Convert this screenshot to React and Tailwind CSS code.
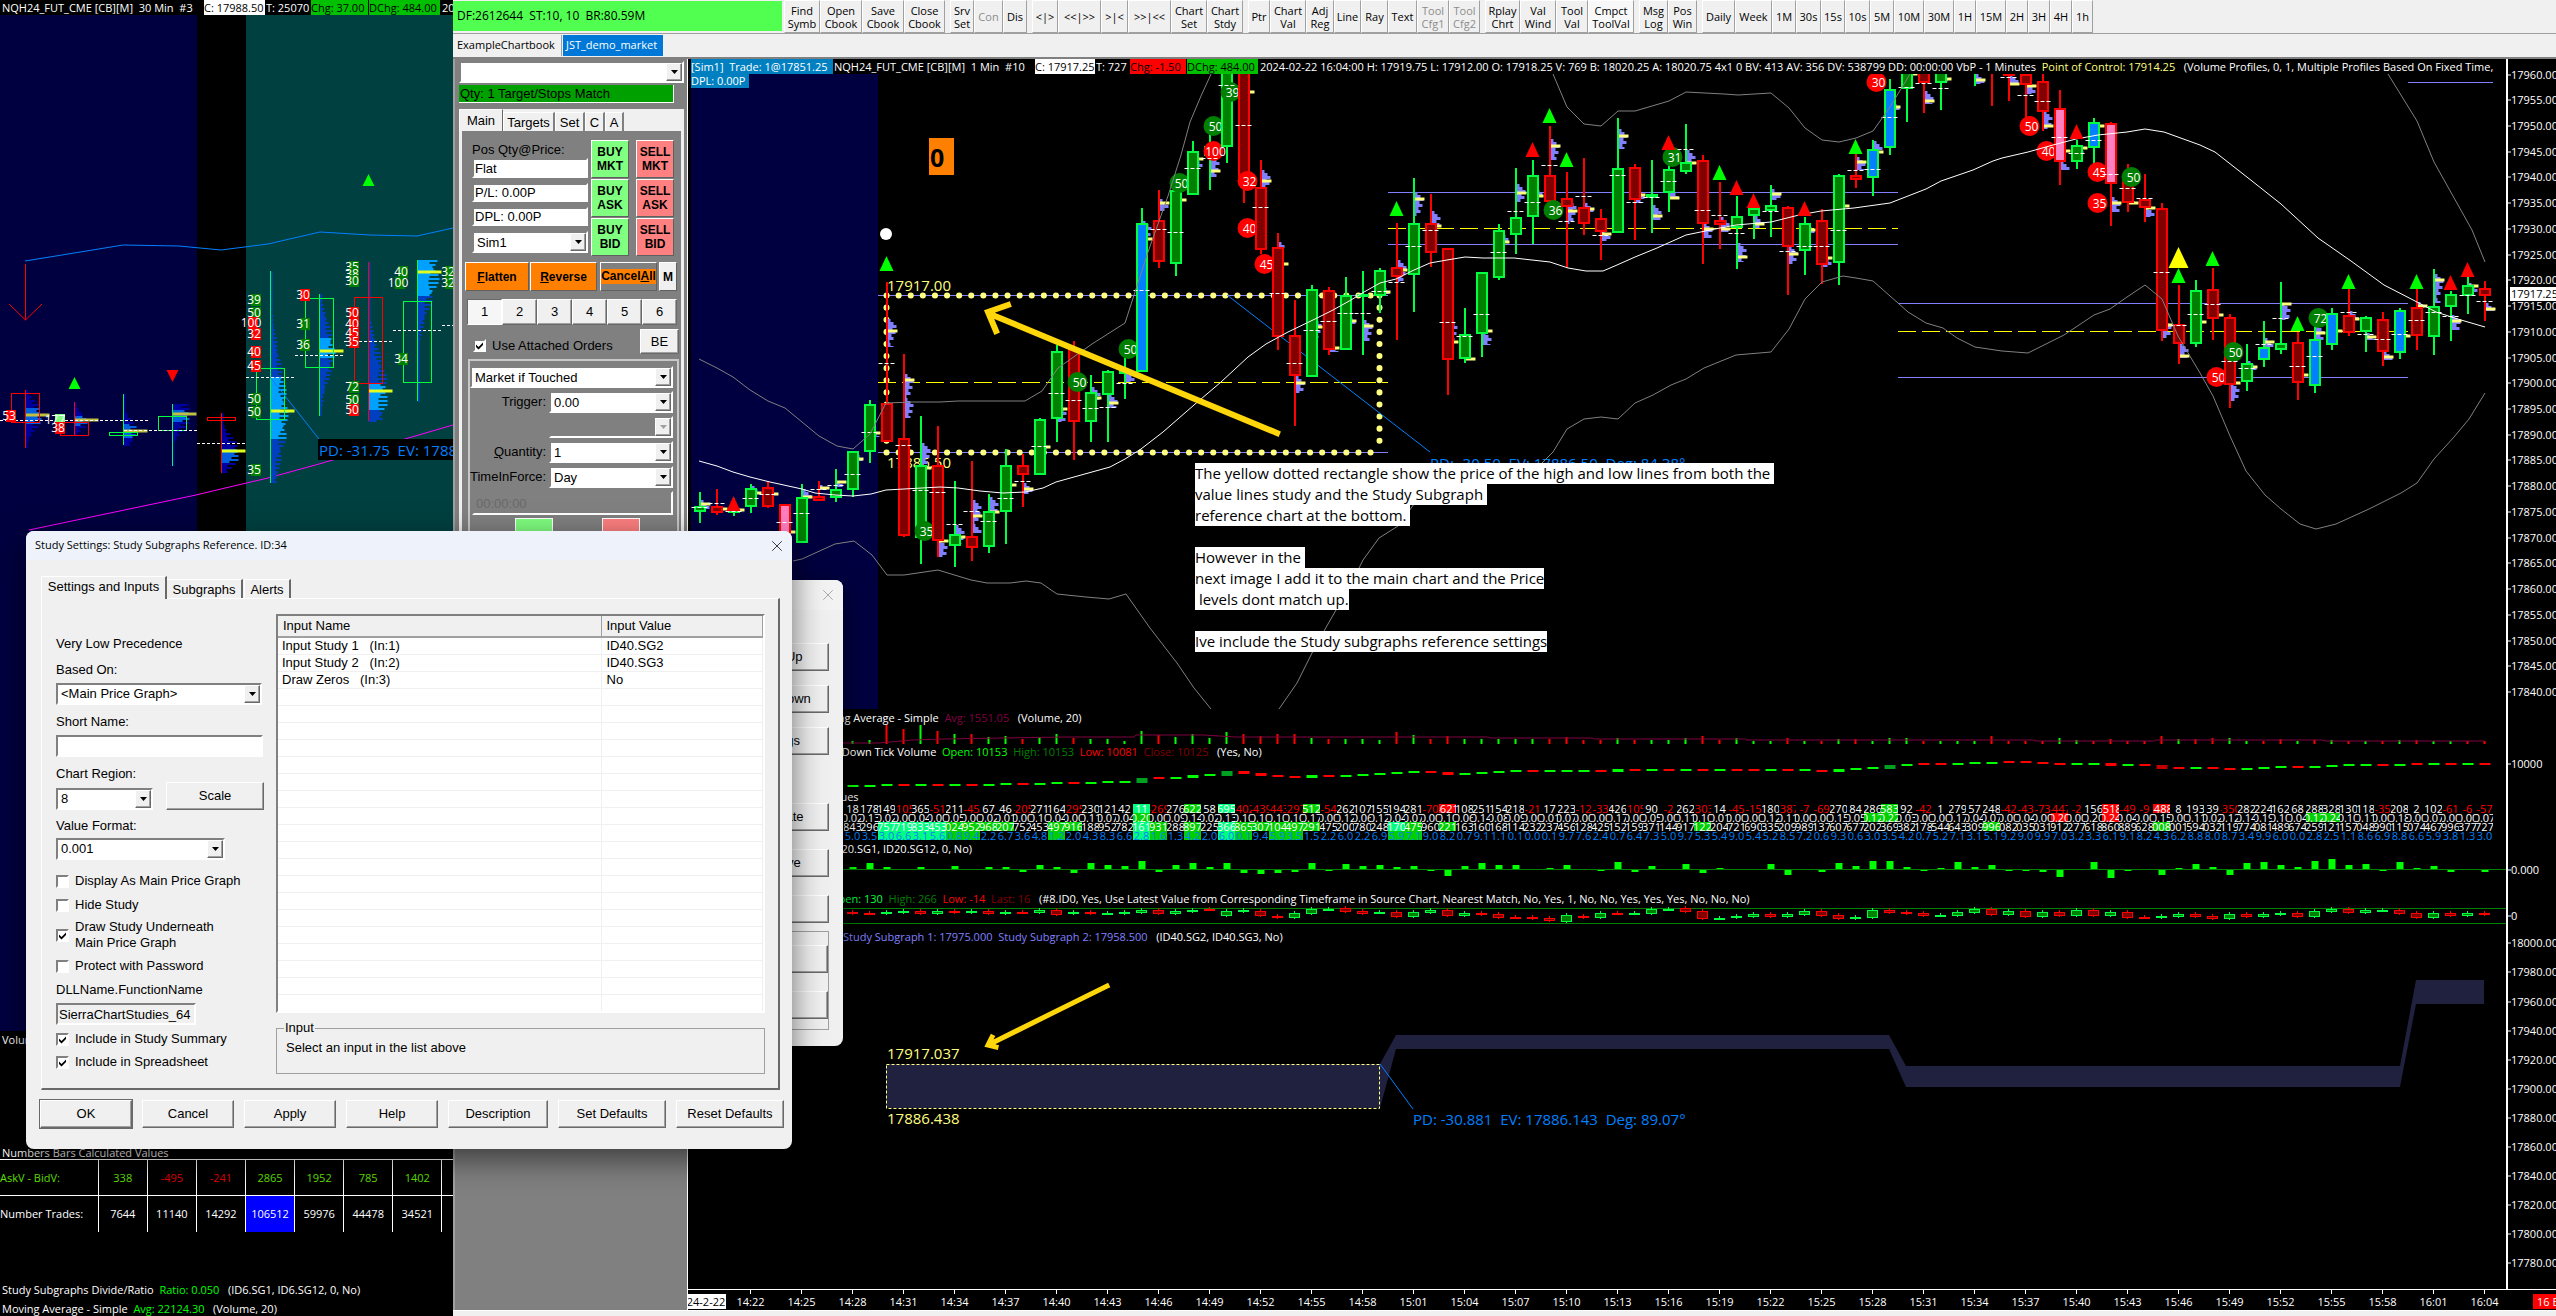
import { X } from 'lucide-react'

const SLOT = 17
const X0 = 699.5
const AXIS_X = 2507
const barX = (i) => X0 + SLOT * i

const PALETTE = {
    G: { fill: '#008000', stroke: '#00ff40' },
    R: { fill: '#800000', stroke: '#ff0000' },
    B: { fill: '#0080ff', stroke: '#00ff40' },
    P: { fill: '#ff80c0', stroke: '#ff0000' },
}

// type, high, top, bottom, low, open-close dash, profile top, profile bottom, poc
const CANDLES = [
    ['G', 492, 507, 511, 523, 507, 500, 510, 504],
    ['R', 489, 507, 512, 515, 503, 0, 0, 509],
    ['G', 498, 510, 512, 516, 511, 0, 0, 510],
    ['G', 484, 489, 506, 513, 498, 486, 493, 493],
    ['R', 481, 488, 506, 508, 494, 0, 0, 494],
    ['P', 504, 505, 545, 548, 522, 0, 0, 532],
    ['G', 484, 498, 542, 543, 513, 489, 499, 497],
    ['R', 481, 497, 500, 501, 489, 485, 490, 488],
    ['G', 469, 490, 497, 502, 485, 481, 487, 482],
    ['G', 451, 452, 489, 497, 474, 452, 462, 459],
    ['G', 400, 405, 451, 463, 432, 430, 437, 433],
    ['R', 282, 404, 441, 441, 363, 319, 347, 331],
    ['R', 354, 439, 535, 537, 445, 374, 418, 380],
    ['G', 416, 466, 537, 564, 490, 443, 469, 468],
    ['R', 426, 466, 540, 557, 492, 540, 557, 541],
    ['G', 481, 535, 545, 567, 524, 525, 544, 537],
    ['R', 461, 537, 547, 561, 511, 500, 533, 516],
    ['G', 494, 512, 546, 553, 521, 497, 511, 512],
    ['G', 449, 466, 511, 544, 498, 0, 0, 485],
    ['R', 454, 466, 474, 507, 481, 483, 494, 489],
    ['G', 418, 420, 474, 475, 446, 445, 450, 447],
    ['G', 345, 352, 418, 442, 393, 406, 422, 409],
    ['R', 341, 350, 421, 460, 400, 0, 0, 0],
    ['G', 375, 393, 421, 442, 408, 387, 400, 398],
    ['G', 370, 372, 394, 442, 407, 394, 408, 403],
    ['G', 357, 371, 373, 399, 383, 372, 382, 0],
    ['B', 208, 224, 371, 372, 290, 221, 240, 239],
    ['R', 190, 221, 261, 268, 229, 199, 211, 203],
    ['G', 181, 191, 263, 276, 232, 0, 0, 200],
    ['G', 141, 152, 194, 194, 168, 158, 167, 159],
    ['G', 133, 147, 155, 190, 158, 156, 177, 171],
    ['G', 74, 70, 146, 163, 85, 0, 0, 0],
    ['R', 74, 70, 180, 203, 125, 0, 0, 92],
    ['R', 160, 188, 249, 254, 207, 170, 187, 181],
    ['R', 233, 248, 336, 350, 293, 242, 248, 264],
    ['R', 300, 336, 375, 426, 363, 376, 393, 383],
    ['G', 285, 290, 376, 377, 330, 318, 338, 327],
    ['R', 287, 291, 349, 355, 321, 345, 352, 348],
    ['G', 277, 296, 349, 350, 313, 315, 325, 321],
    ['G', 271, 295, 296, 355, 313, 320, 341, 326],
    ['G', 268, 271, 295, 313, 291, 285, 295, 292],
    ['R', 223, 268, 276, 340, 282, 260, 282, 270],
    ['G', 178, 224, 274, 312, 246, 192, 216, 199],
    ['R', 194, 224, 252, 267, 230, 211, 228, 226],
    ['R', 249, 249, 359, 395, 322, 320, 340, 342],
    ['G', 308, 335, 358, 363, 336, 0, 0, 359],
    ['G', 272, 273, 333, 357, 314, 332, 345, 331],
    ['G', 224, 231, 277, 280, 252, 232, 243, 242],
    ['G', 168, 218, 234, 254, 211, 184, 202, 193],
    ['G', 160, 176, 216, 244, 202, 187, 197, 196],
    ['R', 126, 176, 201, 201, 165, 139, 160, 146],
    ['R', 172, 199, 206, 268, 221, 200, 224, 211],
    ['R', 158, 208, 223, 235, 196, 203, 214, 209],
    ['R', 209, 219, 231, 260, 235, 230, 241, 234],
    ['G', 118, 169, 232, 233, 175, 129, 149, 136],
    ['R', 164, 168, 199, 240, 202, 190, 203, 195],
    ['G', 160, 195, 197, 233, 197, 205, 220, 216],
    ['G', 161, 170, 192, 212, 181, 190, 198, 198],
    ['G', 124, 163, 171, 174, 149, 150, 164, 163],
    ['R', 155, 161, 223, 264, 210, 223, 238, 229],
    ['R', 182, 221, 224, 249, 215, 217, 232, 229],
    ['G', 196, 217, 227, 269, 233, 243, 262, 257],
    ['G', 207, 209, 215, 239, 0, 216, 228, 224],
    ['G', 185, 206, 210, 237, 211, 189, 200, 194],
    ['R', 206, 208, 246, 295, 251, 246, 264, 254],
    ['G', 217, 224, 250, 275, 246, 224, 236, 230],
    ['R', 209, 221, 264, 284, 246, 256, 267, 258],
    ['G', 174, 176, 262, 285, 230, 0, 0, 206],
    ['R', 154, 176, 179, 188, 170, 157, 170, 162],
    ['B', 140, 150, 177, 196, 169, 141, 151, 152],
    ['B', 79, 90, 147, 155, 117, 101, 110, 107],
    ['G', 74, 70, 88, 122, 87, 0, 0, 74],
    ['R', 74, 70, 82, 113, 83, 91, 104, 101],
    ['G', 74, 70, 82, 110, 88, 76, 82, 79],
    null,
    ['G', 74, 60, 62, 86, 0, 74, 84, 80],
    ['R', 74, 60, 62, 106, 0, 0, 0, 0],
    ['R', 74, 70, 75, 101, 77, 74, 84, 84],
    ['R', 74, 75, 84, 118, 95, 84, 94, 86],
    ['R', 74, 82, 111, 131, 101, 111, 129, 126],
    ['P', 90, 109, 161, 185, 137, 161, 170, 151],
    ['G', 140, 146, 161, 169, 153, 148, 154, 148],
    ['B', 118, 123, 147, 168, 140, 0, 0, 126],
    ['P', 122, 124, 183, 226, 174, 197, 212, 203],
    ['R', 164, 180, 202, 212, 188, 198, 204, 203],
    ['R', 174, 200, 207, 222, 198, 207, 217, 208],
    ['R', 203, 209, 330, 341, 272, 320, 338, 325],
    ['R', 285, 325, 343, 364, 325, 343, 358, 356],
    ['G', 280, 291, 343, 347, 314, 0, 0, 322],
    ['R', 268, 290, 318, 340, 304, 0, 0, 315],
    ['R', 314, 318, 384, 408, 361, 383, 401, 383],
    ['G', 344, 364, 381, 391, 368, 361, 370, 367],
    ['B', 321, 348, 359, 367, 344, 338, 347, 342],
    ['G', 282, 344, 349, 354, 318, 303, 320, 304],
    ['R', 332, 343, 382, 400, 366, 371, 376, 375],
    ['B', 325, 340, 385, 393, 356, 325, 340, 333],
    ['B', 308, 314, 344, 350, 0, 0, 0, 331],
    ['R', 289, 316, 332, 336, 312, 311, 322, 319],
    ['G', 316, 318, 331, 352, 334, 333, 340, 337],
    ['R', 312, 320, 351, 366, 339, 351, 360, 357],
    ['B', 308, 311, 352, 359, 334, 0, 0, 336],
    ['R', 289, 308, 335, 350, 320, 302, 308, 306],
    ['G', 269, 307, 336, 355, 312, 274, 303, 280],
    ['G', 291, 295, 306, 341, 316, 315, 330, 321],
    ['G', 277, 286, 295, 314, 295, 283, 292, 286],
    ['R', 281, 289, 295, 321, 301, 303, 311, 309],
]

// bar index, apex y, colour, optional half width
const MARKERS = [
    [2, 496, '#f00'], [11, 256, '#0f0'], [41, 201, '#0f0'], [49, 142, '#f00'],
    [50, 108, '#0f0'], [51, 152, '#0f0'], [57, 135, '#f00'], [60, 165, '#0f0'],
    [61, 180, '#f00'], [62, 193, '#f00'], [65, 201, '#f00'], [68, 139, '#0f0'],
    [81, 124, '#f00'], [87, 268, '#0f0'], [87, 247, '#ff0', 10], [89, 251, '#0f0'],
    [94, 316, '#0f0'], [97, 274, '#0f0'], [101, 274, '#0f0'], [103, 275, '#f00'],
    [104, 262, '#f00'],
]

// bar index, centre y, volume, side
const BUBBLES = [
    [31, 92, 39, 'G'], [30, 126, 50, 'G'], [30, 151, 100, 'R'], [28, 183, 50, 'G'],
    [32, 181, 32, 'R'], [32, 228, 40, 'R'], [33, 264, 45, 'R'], [25, 349, 50, 'G'],
    [22, 382, 50, 'G'], [13, 531, 35, 'G'], [50, 210, 36, 'G'], [57, 157, 31, 'G'],
    [69, 82, 30, 'R'], [78, 126, 50, 'R'], [79, 151, 40, 'R'], [82, 172, 45, 'R'],
    [82, 203, 35, 'R'], [84, 177, 50, 'G'], [90, 352, 50, 'G'], [89, 377, 50, 'R'],
    [95, 318, 72, 'G'],
]

const MOVING_AVERAGE =
    '699,461 717,466 733,472 750,477 770,482 802,489 815,493 835,495 853,496 871,494 886,490 904,489 940,487 958,488 980,491 1003,493 1025,492 1043,488 1056,482 1074,477 1092,472 1110,467 1125,459 1141,449 1163,432 1194,405 1221,382 1248,357 1266,344 1288,332 1315,319 1333,310 1351,300 1364,292 1380,283 1396,279 1414,270 1430,263 1447,260 1465,257 1483,258 1514,258 1550,262 1568,268 1586,271 1603,271 1617,265 1635,257 1657,248 1686,235 1720,228 1736,225 1771,222 1799,215 1821,211 1854,208 1890,203 1926,189 1941,181 1973,170 1993,161 2002,158 2028,152 2053,145 2076,139 2098,135 2127,132 2145,129 2164,132 2200,145 2215,152 2252,181 2281,204 2318,238 2351,261 2384,285 2417,302 2436,312 2461,320 2485,327'

const BANDS = [
    '699,359 717,368 733,377 750,390 768,401 785,408 802,422 819,436 837,446 853,449 870,434 886,403 913,402 940,402 958,401 1025,401 1042,391 1058,368 1075,356 1092,344 1125,323 1136,289 1148,252 1168,196 1181,155 1190,122 1201,96 1212,72',
    '1553,74 1567,107 1584,124 1601,126 1618,111 1635,111 1669,101 1686,92 1724,94 1738,95 1771,93 1789,108 1805,128 1822,140 1839,142 1856,138 1873,131 1890,107 1910,74',
    '2388,74 2417,121 2434,162 2472,230 2485,262',
    '793,561 802,559 835,544 854,541 872,555 887,575 904,575 938,570 971,580 987,583 1010,583 1026,581 1041,583 1057,594 1086,597 1109,599 1126,594 1150,628 1177,663 1194,688 1211,709',
    '1279,709 1297,683 1312,653 1324,631 1336,610 1359,568 1363,560 1379,538 1398,526 1417,500 1440,487 1500,474 1540,465 1553,452 1567,429 1584,419 1601,417 1618,419 1635,403 1653,395 1671,385 1686,379 1704,368 1736,355 1771,352 1789,329 1805,299 1822,282 1843,276 1856,278 1873,281 1898,303 1908,312 1926,323 1943,328 1957,338 1975,347 2002,351 2028,353 2064,335 2094,315 2110,309 2127,297 2145,285 2162,299 2178,336 2200,373 2213,396 2230,436 2246,471 2265,495 2281,509 2300,524 2316,529 2336,524 2369,509 2401,493 2417,483 2434,459 2454,437 2469,419 2485,393',
]

// x1, x2, high value, point of control, low value
const VALUE_AREAS = [
    [878, 1388, 295, 382, 452],
    [1388, 1898, 192, 228, 244],
    [1898, 2408, 303, 331, 377],
]

// The studies below the price start at bar 9
const FIRST = 9
const VOLUME_COLORS = 'GGRRGRGRGGRGGRGGGGRGGGGRRRRGRGGGRGRRGGGGGRRRRGRGGGRRGGGRGRGRGGGRGGGRRRRGGRRRRRGRRGGRRGRGRGRGRGGR'
const VOLUME = [
    3, 4, 19, 15, 19, 13, 10, 10, 7, 8, 5, 7, 10, 6, 5, 5, 3, 13, 9, 7, 10, 6, 12, 10, 8, 10, 10, 6, 5, 5, 5, 4, 12, 9, 5, 8, 5, 5, 5, 5, 5, 5, 7, 4, 4, 6, 4, 4, 4, 6,
    8, 4, 6, 3, 3, 6, 3, 3, 5, 5, 3, 6, 6, 3, 3, 3, 3, 8, 3, 3, 3, 6, 4, 3, 5, 3, 3, 8, 5, 5, 6, 6, 3, 3, 5, 3, 4, 4, 3, 3, 3, 4, 4, 3, 3, 3, 3,
]
const TICK_COLORS = 'GGGRGRGRGGRGGRGGGGRGGGGRRRRGRGGGGGRRGGGGRGGGRGRGRGRGRRGRGRGGGGGRRGGGRRRRGGRGRRRGRRGGGRGGGGRGRGRGR'
const TICK_Y = [
    289, 288, 284, 286, 286, 286, 286, 286, 284, 283, 283, 282, 278, 278, 278, 277, 277, 271, 265, 264, 259, 256, 250, 247, 253, 258, 260, 259, 258, 258, 254, 253, 250, 247, 247, 250, 252, 248, 247, 244, 243, 244, 242, 242, 242, 241, 240, 241, 240, 240,
    240, 240, 240, 240, 240, 240, 241, 243, 241, 237, 235, 231, 225, 223, 223, 221, 220, 218, 217, 217, 218, 221, 223, 221, 223, 226, 226, 231, 235, 233, 234, 237, 237, 234, 232, 232, 231, 228, 226, 226, 225, 225, 222, 222, 221, 221, 221,
]
const TICK_TALL = { 26: 5, 29: 3, 31: 5, 32: 3, 33: 3, 36: 3, 44: 3, 54: 3, 67: 3, 70: 4, 83: 3, 86: 4, 90: 2 }
const RATIO = [
    2, 6, 2, 0, 2, 0, 3, 0, 2, 2, -2, 4, 2, -3, 6, 4, 3, 8, -2, 4, 6, 2, 6, -3, -4, -3, -2, 6, -1, 5, 3, 4, 2, 3, -1, -6, 3, 6, 4, 4, 0, 1, 4, 0, -1, 7, -2, 3, 0, 5,
    -3, 1, 0, 0, 5, -5, 0, -2, 6, 3, 8, 8, 2, -1, 1, 7, 2, 4, -1, -1, -2, -7, 0, 7, -8, -1, 0, -5, 1, 5, 2, -5, 6, 7, 4, 2, 8, 10, 4, 5, -1, 7, 1, 3, -2, 0, -2,
]
// colour, top, bottom in thirds of a pixel from the region origin
const SOURCE =
    'R666,671 R668,671 G665,671 G663,670 R663,671 G662,671 R663,668 G663,668 R663,671 G666,672 R666,668 G659,668 R660,674 G666,672 R666,671 G669,671 G667,671 G660,668 R660,671 G663,671 G660,665 R657,660 G663,677 G660,665 R663,678 R678,683 G669,683 G657,671 G657,659 R655,665 R663,671 G666,670 R666,680 G666,680 G660,668 R660,677 G669,677 R670,674 R672,683 R681,684 R682,686 R684,694 G675,695 R678,683 G669,683 R669,671 G669,671 G657,671 G656,659 R655,665 R663,686 G684,686 G678,685 G672,681 R672,681 G672,681 G663,674 R663,677 R675,686 G681,686 G660,683 R660,668 R666,671 R669,677 G675,678 G666,677 G657,668 R657,674 G663,674 R663,680 G666,680 R666,677 G660,677 R660,677 G666,677 R666,683 R681,683 G678,683 G672,680 R672,681 R678,686 G672,686 R672,681 G672,680 G669,674 R669,680 G663,680 G657,665 R657,668 G660,669 G660,662 R660,671 R669,683 G669,683 R669,677 G669,677 R669,674'
        .split(' ')
        .map((s) => [s[0], ...s.slice(1).split(',').map(Number)])

const NUMBER_ROWS = [
    {
        color: 'text-white',
        values: '18 178 149 -105 365 -51 211 -45 67 46 -205 271 164 -295 230 121 42 11 -269 276 622 58 695 -402 -439 -443 -297 512 -54 262 107 155 194 281 -70 -621 108 251 154 218 -21 17 223 -12 -33 426 -105 90 -2 262 -303 14 -45 -15 180 -387 -7 -69 270 84 286 583 92 -42 1 279 57 248 -42 -43 -73 -447 -2 156 -518 -49 -9 -488 8 193 39 -350 282 224 162 68 288 328 130 118 -35 208 2 102 -61 -6 -57',
        cyan: [26, 31],
        green: [29, 36, 70],
        red: [44, 83, 86],
    },
    {
        color: 'text-white',
        values: '0.02 0.13 0.02 0.00 0.04 0.00 0.05 0.00 0.02 0.01 0.00 0.10 0.04 0.00 0.11 0.07 0.04 0.20 0.00 0.09 0.14 0.02 0.13 0.10 0.10 0.10 0.10 0.17 0.00 0.12 0.06 0.12 0.04 0.07 0.00 0.10 0.06 0.14 0.08 0.09 0.00 0.01 0.07 0.00 0.00 0.17 0.00 0.05 0.00 0.11 0.10 0.01 0.00 0.00 0.12 0.11 0.00 0.00 0.15 0.05 0.12 0.22 0.03 0.00 0.00 0.17 0.04 0.07 0.00 0.04 0.00 0.20 0.00 0.20 0.24 0.04 0.00 0.15 0.00 0.11 0.02 0.12 0.14 0.19 0.10 0.04 0.12 0.24 0.10 0.11 0.00 0.18 0.00 0.07 0.00 0.00 0.07',
        cyan: [],
        green: [26, 69, 70, 95, 96],
        red: [80, 83],
    },
    {
        color: 'text-white',
        values: '843 296 757 719 833 453 024 952 968 207 752 453 497 916 188 952 782 161 931 288 897 225 366 865 307 104 497 291 475 200 780 248 170 475 960 221 163 160 168 114 232 237 456 128 425 152 159 371 144 917 122 204 721 690 335 209 989 137 607 677 202 369 382 178 544 643 309 996 082 035 031 912 277 618 860 889 628 008 001 594 032 119 774 081 489 674 259 121 157 048 990 115 074 467 996 377 727',
        cyan: [11, 12, 13, 14, 26, 31, 41],
        green: [15, 16, 17, 18, 21, 22, 27, 29, 32, 33, 34, 35, 36, 42, 44, 59, 76, 86],
        red: [],
    },
    {
        color: 'text-[#0080ff]',
        values: '5.0 3.5 3.0 6.6 3.1 5.6 0.8 9.4 2.2 6.7 3.6 4.8 1.2 2.0 4.3 8.3 6.6 2.8 1.6 1.3 4.2 2.0 6.0 0.1 9.4 5.9 3.5 1.5 2.2 6.0 2.2 6.9 5.9 7.1 9.0 8.2 0.7 9.1 1.1 0.1 0.0 0.1 9.7 7.6 2.4 0.7 6.4 7.3 5.0 9.7 5.3 5.4 9.0 5.4 5.2 8.5 7.2 0.6 9.3 0.6 3.0 3.5 4.2 0.7 5.2 7.1 3.1 5.1 9.2 9.0 9.9 7.0 3.2 3.3 6.1 9.1 8.2 4.3 6.2 8.8 8.0 8.7 3.4 9.9 6.0 0.0 2.8 2.5 1.1 8.6 6.9 8.8 6.6 5.9 3.8 1.3 3.0',
        cyan: [11, 12, 13, 14, 26, 31],
        green: [15, 16, 21, 27, 29, 32, 34, 35, 41, 42],
        red: [],
    },
]

const RAISED = 'border border-t-white border-l-white border-r-[#696969] border-b-[#696969] bg-[#f0f0f0] shadow-[inset_-1px_-1px_0_#a0a0a0]'
const SUNKEN = 'border-2 border-t-[#808080] border-l-[#808080] border-r-white border-b-white'

const TOOLBAR = [
    [
        ['Find Symb', 'w-[36px]'], ['Open Cbook', 'w-[42px]'], ['Save Cbook', 'w-[42px]'], ['Close Cbook', 'w-[41px]'],
    ],
    [['Srv Set', 'w-[24px]'], ['Con', 'w-[29px]', 'off'], ['Dis', 'w-[24px]']],
    [
        ['<|>', 'w-[26px]'], ['<<|>>', 'w-[43px]'], ['>|<', 'w-[27px]'], ['>>|<<', 'w-[43px]'],
        ['Chart Set', 'w-[36px]'], ['Chart Stdy', 'w-[36px]'],
    ],
    [
        ['Ptr', 'w-[22px]'], ['Chart Val', 'w-[36px]'], ['Adj Reg', 'w-[28px]'], ['Line', 'w-[27px]'],
        ['Ray', 'w-[27px]'], ['Text', 'w-[29px]'], ['Tool Cfg1', 'w-[32px]', 'off'], ['Tool Cfg2', 'w-[31px]', 'off'],
    ],
    [
        ['Rplay Chrt', 'w-[35px]'], ['Val Wind', 'w-[36px]'], ['Tool Val', 'w-[32px]'], ['Cmpct ToolVal', 'w-[46px]', 'on'],
    ],
    [['Msg Log', 'w-[29px]'], ['Pos Win', 'w-[29px]']],
    [
        ['Daily', 'w-[33px]'], ['Week', 'w-[37px]'], ['1M', 'w-[24px]'], ['30s', 'w-[25px]'], ['15s', 'w-[24px]'],
        ['10s', 'w-[25px]'], ['5M', 'w-[24px]'], ['10M', 'w-[30px]'], ['30M', 'w-[30px]'], ['1H', 'w-[22px]'],
        ['15M', 'w-[30px]'], ['2H', 'w-[22px]'], ['3H', 'w-[22px]'], ['4H', 'w-[22px]'], ['1h', 'w-[21px]'],
    ],
]

function Toolbar() {
    return (
        <div className="flex h-[33px] shrink-0 gap-[5px] bg-[#f0f0f0]">
            <div className="mt-px mr-[-3px] flex h-[30px] w-[329px] shrink-0 items-center bg-[#50ff50] pl-1 text-[12px] whitespace-pre text-black">
                DF:2612644  ST:10, 10  BR:80.59M
            </div>
            {TOOLBAR.map((group, g) => (
                <div key={g} className="flex shrink-0">
                    {group.map(([label, width, state]) => (
                        <button
                            key={label}
                            type="button"
                            disabled={state === 'off'}
                            className={`${width} flex h-[33px] items-center justify-center border-t border-r border-b border-l border-t-white border-r-[#a0a0a0] border-b-[#a0a0a0] border-l-white text-center text-[11px] leading-[13px] disabled:text-[#8c8c8c] ${state === 'on' ? 'bg-[#f8f8f8]' : 'bg-[#f0f0f0]'}`}
                        >
                            {label}
                        </button>
                    ))}
                </div>
            ))}
        </div>
    )
}

function Tick() {
    return (
        <svg viewBox="0 0 9 9" className="pointer-events-none absolute top-[2px] left-[2px] hidden h-[9px] w-[9px] peer-checked:block">
            <path d="M1 3.5 L3.5 6 L8 1.5 V4 L3.5 8.5 L1 6Z" fill="#000" />
        </svg>
    )
}

function CheckBox({ label, checked, className = '' }) {
    return (
        <label className={`flex items-center gap-[6px] leading-[16px] ${className}`}>
            <span className="relative h-[13px] w-[13px] shrink-0">
                <input
                    type="checkbox"
                    defaultChecked={checked}
                    className={`peer block h-[13px] w-[13px] appearance-none bg-white ${SUNKEN}`}
                />
                <Tick />
            </span>
            {label}
        </label>
    )
}

function Combo({ id, name, value, className = '', disabled }) {
    return (
        <span className={`relative block h-[22px] ${SUNKEN} ${disabled ? 'bg-[#808080]' : 'bg-white'} ${className}`}>
            <select
                id={id}
                aria-label={name}
                disabled={disabled}
                className="h-full w-full appearance-none truncate bg-transparent pr-4 pl-[3px] text-[13px] leading-[16px] text-black outline-none"
            >
                <option>{value}</option>
            </select>
            <span className={`pointer-events-none absolute top-0 right-0 flex h-full w-4 items-center justify-center ${RAISED}`}>
                <svg viewBox="0 0 7 4" className="h-1 w-[7px]">
                    <path d="M0 0H7L3.5 4Z" fill={disabled ? '#a0a0a0' : '#000'} />
                </svg>
            </span>
        </span>
    )
}

const PAIRS = [['BUY', 'SELL', 'MKT'], ['BUY', 'SELL', 'ASK'], ['BUY', 'SELL', 'BID']]

function TradePanel() {
    const field = `block w-[116px] bg-white px-px text-[13px] ${SUNKEN}`
    const side = 'h-[38px] w-[38px] border border-t-white border-l-white border-r-[#606060] border-b-[#606060] text-[12px] leading-[14px] font-bold'
    const action = 'h-[29px] border border-t-white border-l-white border-r-[#606060] border-b-[#606060] text-[12px] font-bold'
    return (
        <aside className="w-[235px] shrink-0 overflow-hidden border-r border-l-2 border-r-white border-l-[#a0a0a0] bg-[#808080] pt-[2px] pr-[3px] pl-1 font-['Liberation_Sans',Arial,sans-serif] text-[13px] text-black">
            <Combo name="Trade configuration" value="" className="w-[225px]" />
            <div className="mt-[2px] h-[18px] w-[215px] border-r border-b border-white bg-[#00a000] px-px text-[13px] leading-[17px]">
                Qty: 1 Target/Stops Match
            </div>
            <div role="tablist" className="mt-[6px] flex h-[22px] w-[225px] items-end bg-[#f0f0f0]">
                <button role="tab" type="button" className="h-[22px] w-[44px] border-t border-r border-l border-t-white border-r-[#696969] border-l-white">Main</button>
                {[['Targets', 'w-[52px]'], ['Set', 'w-[30px]'], ['C', 'w-[20px]'], ['A', 'w-[19px]']].map(([t, w]) => (
                    <button key={t} role="tab" type="button" className={`${w} h-[19px] border-t border-r-2 border-l border-t-white border-r-[#808080] border-l-white`}>{t}</button>
                ))}
            </div>
            <div className="h-[900px] w-[225px] border-r-[3px] border-l-[3px] border-[#f0f0f0] pt-[9px]">
                <div className="flex">
                    <div className="ml-[10px] flex flex-col gap-[5px]">
                        <label className="block">
                            <span className="block h-[18px] leading-[20px]">Pos Qty@Price:</span>
                            <input readOnly value="Flat" className={`${field} h-[20px]`} />
                        </label>
                        <input readOnly aria-label="P/L" value="P/L: 0.00P" className={`${field} h-[19px]`} />
                        <input readOnly aria-label="DPL" value="DPL: 0.00P" className={`${field} h-[19px]`} />
                        <Combo name="Account" value="Sim1" className="w-[116px]" />
                    </div>
                    <div className="ml-[3px] flex flex-col gap-px">
                        {PAIRS.map(([buy, sell, kind]) => (
                            <div key={kind} className="flex gap-[7px]">
                                <button type="button" className={`${side} bg-[#80ff80]`}>{buy}<br />{kind}</button>
                                <button type="button" className={`${side} bg-[#ff8080]`}>{sell}<br />{kind}</button>
                            </div>
                        ))}
                    </div>
                </div>
                <div className="mt-[6px] ml-[3px] flex">
                    <button type="button" className={`${action} w-[64px] bg-[#ff8000]`}><u>F</u>latten</button>
                    <button type="button" className={`${action} ml-px w-[67px] bg-[#ff8000]`}><u>R</u>everse</button>
                    <button type="button" className={`${action} ml-[3px] flex w-[57px] items-center justify-center bg-[#808080]`}>
                        <span className="bg-[#ff8000] leading-[15px]">Cancel<u>A</u>ll</span>
                    </button>
                    <button type="button" className={`${action} ml-[2px] w-[18px] bg-[#f0f0f0]`}>M</button>
                </div>
                <div className="mt-2 ml-[5px] flex">
                    {[1, 2, 3, 4, 5, 6].map((n) => (
                        <button
                            key={n}
                            type="button"
                            className={`h-[26px] w-[35px] text-[13px] ${n === 1 ? 'border border-t-[#696969] border-l-[#696969] border-r-white border-b-white bg-[#f6f6f6]' : RAISED}`}
                        >
                            {n}
                        </button>
                    ))}
                </div>
                <div className="mt-1 mr-[2px] ml-[11px] flex items-center justify-between">
                    <CheckBox label="Use Attached Orders" checked className="pt-2" />
                    <button type="button" className={`h-[25px] w-[39px] ${RAISED}`}>BE</button>
                </div>
                <div className="mt-[5px] mr-[2px] ml-[6px] border-2 border-[#c8c8c8] pt-[5px]">
                    <Combo name="Order type" value="Market if Touched" className="w-[203px]" />
                    <div className="mt-[3px] grid grid-cols-[76px_124px] items-center gap-x-[3px] gap-y-[3px] text-right">
                        <label htmlFor="trigger">Trigger:</label>
                        <Combo id="trigger" value="0.00" />
                        <span />
                        <Combo name="Offset" value="" disabled />
                        <label htmlFor="quantity"><u>Q</u>uantity:</label>
                        <Combo id="quantity" value="1" />
                        <label htmlFor="tif">TimeInForce:</label>
                        <Combo id="tif" value="Day" />
                    </div>
                    <input readOnly disabled aria-label="Expiry" value="00:00:00" className={`mt-[3px] ml-[2px] block h-[24px] w-[201px] bg-[#808080] px-[2px] text-[#6a6a6a] ${SUNKEN}`} />
                    <div className="mt-[3px] ml-[45px] flex gap-[49px]">
                        <div className="h-[20px] w-[38px] border border-white bg-[#80ff80]" />
                        <div className="h-[20px] w-[38px] border border-white bg-[#ff8080]" />
                    </div>
                </div>
            </div>
        </aside>
    )
}

function Profile({ x, top, bottom }) {
    const widths = [3, 6, 9, 5, 8, 4, 6, 2]
    let d = `M${x} ${top}`
    for (let y = top, k = 0; y < bottom; y += 3, k++) {
        d += `H${x + widths[k % 8]}V${Math.min(y + 3, bottom)}`
    }
    return <path d={`${d}H${x}Z`} fill="#8080ff" />
}

function Candle({ x, data }) {
    const [type, high, top, bottom, low] = data
    const { fill, stroke } = PALETTE[type]
    return (
        <g stroke={stroke} strokeWidth="2" shapeRendering="crispEdges">
            <path d={`M${x} ${high}V${low}`} />
            <rect x={x - 5} y={top} width="10" height={Math.max(bottom - top, 1)} fill={fill} />
        </g>
    )
}

function AxisLabels({ items }) {
    return (
        <g className="text-[11px]" fill="#fff">
            {items.map(([y, text]) => (
                <g key={text}>
                    <path d={`M${AXIS_X} ${Math.round(y)}h4`} stroke="#fff" />
                    <text x="2511" y={y + 4}>{text}</text>
                </g>
            ))}
        </g>
    )
}

// One chart region; children are drawn in window coordinates
function Region({ top, height, heading, headingClass = '', className = '', children, after }) {
    return (
        <div className={`relative overflow-hidden ${className}`}>
            <svg className="absolute top-0 left-0" width="1868" height={height} viewBox={`688 ${top} 1868 ${height}`}>
                {children}
                <path d={`M${AXIS_X} ${top}v${height}`} stroke="#fff" strokeWidth="2" />
            </svg>
            <p className={`relative h-[15px] text-[11px] leading-[15px] whitespace-pre text-white ${headingClass}`}>{heading}</p>
            {after}
        </div>
    )
}

function PriceRegion() {
    const prices = Array.from({ length: 25 }, (_, k) => [74.5 + k * 25.73, `${17960 - k * 5}.00`])
    return (
        <Region
            top={59}
            height={651}
            className="h-[651px]"
            headingClass="pl-[3px]"
            heading={
                <span className="flex w-[1815px] overflow-hidden">
                    <span className="w-[142px] shrink-0 bg-[#0080c0]">[Sim1]  Trade: 1@17851.25</span>
                    <span className="w-[202px] shrink-0 pl-px">NQH24_FUT_CME [CB][M]  1 Min  #10</span>
                    <span className="w-[60px] shrink-0 bg-white text-black">C: 17917.25</span>
                    <span className="w-[35px] shrink-0 pl-px">T: 727</span>
                    <span className="w-[56px] shrink-0 bg-[#ff0000] text-black">Chg: -1.50</span>
                    <span className="ml-px w-[71px] shrink-0 bg-[#00c000] text-black">DChg: 484.00</span>
                    <span className="shrink-0 pl-[2px]">2024-02-22 16:04:00 H: 17919.75 L: 17912.00 O: 17918.25 V: 769 B: 18020.25 A: 18020.75 4x1 0 BV: 413 AV: 356 DV: 538799 DD: 00:00:00 VbP - 1 Minutes  <span className="text-[#ffff80]">Point of Control: 17914.25</span>   (Volume Profiles, 0, 1, Multiple Profiles Based On Fixed Time,</span>
                </span>
            }
            after={
                <>
                    <p className="relative ml-[3px] h-[14px] w-[58px] bg-[#0080c0] text-[11px] leading-[14px] whitespace-nowrap text-white">DPL: 0.00P</p>
                    <Annotation />
                </>
            }
        >
            <rect x="691" y="59" width="187" height="650" fill="#000040" />
            {VALUE_AREAS.map(([a, b, high, poc, low]) => (
                <g key={a} shapeRendering="crispEdges" strokeWidth="1">
                    <path d={`M${a} ${high + 0.5}H${b}M${a} ${low + 0.5}H${b}`} stroke="#8080ff" />
                    <path d={`M${a} ${poc + 0.5}H${b}`} stroke="#ff0" strokeDasharray="18 6" />
                </g>
            ))}
            <path d="M2408 82.5H2493" stroke="#8080ff" />
            <g fill="none" stroke="#ffff80" strokeWidth="6" strokeLinecap="round" strokeDasharray="0.1 12">
                <path d="M886.5 295.5H1380M886.5 452.5H1380M886.5 295.5V452M1379.5 295.5V452" />
            </g>
            <path d="M1227 295L1430 452" stroke="#0080ff" />
            <g className="text-[15px]">
                <text x="887" y="291" fill="#ffff80">17917.00</text>
                <text x="887" y="468" fill="#ffff80">17886.50</text>
                <text x="1430" y="469" fill="#0080ff" xmlSpace="preserve">PD: -30.50  EV: 17886.50  Deg: 84.38°</text>
            </g>
            {CANDLES.map((c, i) => {
                if (!c) return null
                const [, , , , , dash, p0, p1, poc] = c
                const x = barX(i)
                return (
                    <g key={i}>
                        {p1 > 0 && <Profile x={x + 1} top={p0} bottom={p1} />}
                        {poc > 0 && <path d={`M${x + 1} ${poc}h10`} stroke="#ffff80" strokeWidth="3" />}
                        <Candle x={x} data={c} />
                        {BUBBLES.filter(([bar]) => bar === i).map(([, y, n, side]) => (
                            <g key={y}>
                                <circle cx={x + 4} cy={y} r="10" fill={side === 'G' ? '#008000' : '#ff0000'} />
                                <text x={x + 6} y={y + 5} fill="#fff" textAnchor="middle" className="text-[12px]">{n}</text>
                            </g>
                        ))}
                        {dash > 0 && <path d={`M${x - 8} ${dash + 0.5}h16`} stroke="#fff" strokeDasharray="4 2" />}
                    </g>
                )
            })}
            <rect x="688" y="59" width="1819" height="15" fill="#000" />
            <polyline points={MOVING_AVERAGE} fill="none" stroke="#fff" strokeWidth="1" />
            {BANDS.map((points) => (
                <polyline key={points} points={points} fill="none" stroke="#808080" strokeWidth="1" />
            ))}
            {MARKERS.map(([i, y, color, half = 7]) => (
                <path key={`${i}-${y}`} d={`M${barX(i)} ${y}l${half} ${half * 2 + 1}h${-half * 2}Z`} fill={color} />
            ))}
            <circle cx="886" cy="234" r="6" fill="#fff" />
            <rect x="929" y="138" width="25" height="37" fill="#ff8000" />
            <text x="930" y="167" className="text-[25px] font-bold" fill="#000">0</text>
            <g fill="none" stroke="#ffd60a" strokeWidth="6" strokeLinecap="square">
                <path d="M1277 433L990 314M1008 305L988 312L996 331" />
            </g>
            <AxisLabels items={prices} />
            <rect x="2510" y="287" width="46" height="14" fill="#fff" />
            <text x="2511" y="298" className="text-[11px]" fill="#000">17917.25</text>
        </Region>
    )
}

const NOTE = [
    'The yellow dotted rectangle show the price of the high and low lines from both the ',
    'value lines study and the Study Subgraph ',
    'reference chart at the bottom. ',
    '',
    'However in the ',
    'next image I add it to the main chart and the Price',
    ' levels dont match up.',
    '',
    'Ive include the Study subgraphs reference settings',
]

function Annotation() {
    return (
        <div className="absolute top-[404px] left-[507px] text-[15px] leading-[21px] whitespace-pre text-black">
            {NOTE.map((line, i) => (
                <p key={i} className="h-[21px] w-max bg-white">{line}</p>
            ))}
        </div>
    )
}

function NumberGrid() {
    return (
        <div className="relative ml-[156px] text-[11px]">
            {NUMBER_ROWS.map(({ color, values, cyan, green, red }, r) => (
                <div key={r} className="flex h-[9px]">
                    {values.split(' ').map((v, k) => {
                        const i = k + FIRST
                        const bg = cyan.includes(i) ? 'bg-[#00ff80]' : green.includes(i) ? 'bg-[#00d000]' : red.includes(i) ? 'bg-[#ff0000]' : ''
                        return (
                            <span key={k} className={`flex h-[9px] w-[17px] shrink-0 items-center justify-center overflow-hidden leading-[9px] ${v[0] === '-' && !bg ? 'text-[#ff0000]' : color} ${bg}`}>
                                {v}
                            </span>
                        )
                    })}
                </div>
            ))}
        </div>
    )
}

function ChartWindow() {
    const times = Array.from({ length: 35 }, (_, k) => {
        const minutes = 14 * 60 + 22 + k * 3
        return [barX(3 + k * 3), `${Math.floor(minutes / 60)}:${String(minutes % 60).padStart(2, '0')}`]
    })
    const reference = Array.from({ length: 12 }, (_, k) => [943.3 + k * 29.1, `${18000 - k * 20}.00`])
    return (
        <main className="flex min-w-0 flex-1 flex-col overflow-hidden bg-black">
            <PriceRegion />
            <Region top={710} height={34} className="h-[34px]" headingClass="pl-[125px]"
                heading={<>Moving Average - Simple  <span className="text-[#800040]">Avg: 1551.05</span>   (Volume, 20)</>}>
                {VOLUME.map((h, k) => (
                    <rect key={k} x={barX(k + FIRST) - 1} y={744 - h} width="2" height={h} fill={VOLUME_COLORS[k] === 'G' ? '#0f0' : '#f00'} />
                ))}
                <polyline points="843,743 879,743 912,740 945,739 1000,738 1066,737 1134,737 1136,735 1203,735 1236,737 1488,737 1491,738 1592,738 1595,739 1745,739 1747,740 2033,740 2036,741 2154,741 2156,740 2322,740 2325,741 2484,741" fill="none" stroke="#800040" strokeWidth="1" />
            </Region>
            <Region top={744} height={45} className="h-[45px]" headingClass="pl-[135px]"
                heading={<>Up/Down Tick Volume  <span className="text-[#0f0]">Open: 10153</span>  <span className="text-[#008000]">High: 10153</span>  <span className="text-[#f00]">Low: 10081</span>  <span className="text-[#800000]">Close: 10125</span>   (Yes, No)</>}>
                {TICK_Y.map((y, k) => {
                    const h = TICK_TALL[k + FIRST] ?? 2
                    return <rect key={k} x={barX(k + FIRST) - 5} y={Math.round(690 + y / 3 - h / 2)} width="11" height={h} fill={TICK_COLORS[k] === 'G' ? (h > 3 ? '#00a020' : '#0f0') : h > 3 ? '#c00000' : '#f00'} />
                })}
                <AxisLabels items={[[764, '10000']]} />
            </Region>
            <Region top={789} height={52} className="h-[52px]" headingClass="pl-[4px]" heading="Numbers Bars Calculated Values" after={<NumberGrid />} />
            <Region top={841} height={50} className="h-[50px]" headingClass="w-[284px] text-right"
                heading={<>Delta  Ratio: -0.021   (ID20.SG1, ID20.SG12, 0, No)</>}>
                <path d="M691 869.5H2506" stroke="#008000" />
                {RATIO.map((v, k) => (
                    <rect key={k} x={barX(k + FIRST) - 3} y={v > 0 ? 869 - v : 870} width="7" height={Math.abs(v)} fill="#0f0" />
                ))}
                <AxisLabels items={[[869.5, '0.000']]} />
            </Region>
            <Region top={891} height={38} className="h-[38px]" headingClass="pl-[142px]"
                heading={<><span className="text-[#00ff40]">Open: 130</span>  <span className="text-[#008000]">High: 266</span>  <span className="text-[#f00]">Low: -14</span>  <span className="text-[#800000]">Last: 16</span>   (#8.ID0, Yes, Use Latest Value from Corresponding Timeframe in Source Chart, Nearest Match, No, Yes, 1, No, No, Yes, Yes, Yes, No, No, No)</>}>
                <path d="M691 908.5H2506M691 923.5H2506" stroke="#008000" />
                {SOURCE.map(([type, top, bottom], k) => {
                    const a = Math.round(690 + top / 3)
                    const b = Math.round(690 + bottom / 3)
                    const { fill, stroke } = PALETTE[type]
                    return (
                        <g key={k} stroke={stroke} shapeRendering="crispEdges">
                            <path d={`M${barX(k + FIRST)} ${a - 2}V${b + 1}`} />
                            <rect x={barX(k + FIRST) - 5} y={a + 0.5} width="10" height={Math.max(b - a - 1, 1)} fill={fill} />
                        </g>
                    )
                })}
                <AxisLabels items={[[915.5, '0']]} />
            </Region>
            <Region top={929} height={361} className="h-[361px] border-b border-white" headingClass="pl-[155px]"
                heading={<><span className="text-[#8080ff]">Study Subgraph 1: 17975.000  Study Subgraph 2: 17958.500</span>   (ID40.SG2, ID40.SG3, No)</>}>
                <path d="M886 1064H1380L1396 1035H1889L1906 1066H2400L2416 980H2484V1004H2416L2400 1087H1906L1889 1049H1396L1380 1108H886Z" fill="#20203f" />
                <rect x="886.5" y="1064.5" width="493" height="44" fill="none" stroke="#ffff80" strokeDasharray="3 2" />
                <path d="M1380 1064L1413 1109" stroke="#0080ff" />
                <g className="text-[15px]">
                    <text x="887" y="1059" fill="#ffff80">17917.037</text>
                    <text x="887" y="1124" fill="#ffff80">17886.438</text>
                    <text x="1413" y="1125" fill="#0080ff" xmlSpace="preserve">PD: -30.881  EV: 17886.143  Deg: 89.07°</text>
                </g>
                <path d="M1107 986L990 1044M992 1037L988 1045L996 1047" fill="none" stroke="#ffd60a" strokeWidth="5" strokeLinecap="square" />
                <AxisLabels items={reference} />
            </Region>
            <svg className="block" width="1868" height="20" viewBox="688 1290 1868 20">
                <rect x="688" y="1294" width="38" height="15" fill="#fff" />
                <g className="text-[11px]" textAnchor="middle">
                    <text x="706" y="1306" fill="#000">24-2-22</text>
                    {times.map(([x, t]) => (
                        <g key={t}>
                            <path d={`M${x} 1290v4`} stroke="#fff" />
                            <text x={x} y="1306" fill="#fff">{t}</text>
                        </g>
                    ))}
                </g>
                <rect x="2533" y="1294" width="23" height="15" fill="#f00" />
                <text x="2537" y="1306" fill="#fff" className="text-[11px]">16 B</text>
            </svg>
        </main>
    )
}

// x, type, high, top, bottom, low, profile width, value area top, value area bottom, poc
const DAY_CANDLES = [
    [25.5, 'R', 390, 393, 422, 448, 18, 408, 424, 415],
    [74.5, 'R', 402, 422, 435, 436, 14, 416, 426, 420],
    [123.5, 'G', 394, 432, 435, 445, 14, 424, 438, 431],
    [172.5, 'G', 404, 416, 430, 466, 20, 409, 422, 414],
    [221.5, 'R', 413, 417, 420, 473, 20, 448, 462, 451],
    [270.5, 'G', 271, 368, 419, 483, 18, 377, 438, 411],
    [319.5, 'G', 294, 298, 367, 416, 16, 338, 358, 351],
    [368.5, 'R', 262, 297, 383, 421, 20, 383, 410, 391],
    [417.5, 'G', 260, 301, 382, 401, 22, 260, 295, 272],
]

const DAY_LABELS = [
    [9, 416, '53', 'R'], [58, 428, '38', 'R'], [254, 300, '39', 'G'], [254, 313, '50', 'G'], [251, 323, '100', 'R'],
    [254, 334, '32', 'R'], [254, 352, '40', 'R'], [254, 366, '45', 'R'], [254, 399, '50', 'G'], [254, 412, '50', 'G'],
    [254, 470, '35', 'G'], [303, 295, '30', 'R'], [303, 324, '31', 'G'], [303, 345, '36', 'G'], [352, 267, '35', 'G'],
    [352, 274, '38', 'G'], [352, 281, '30', 'G'], [352, 313, '50', 'R'], [352, 324, '40', 'R'], [352, 333, '45', 'R'],
    [352, 342, '35', 'R'], [352, 387, '72', 'G'], [352, 400, '50', 'G'], [352, 410, '50', 'R'], [401, 272, '40', 'G'],
    [398, 283, '100', 'G'], [401, 359, '34', 'G'], [448, 272, '32', 'G'], [448, 283, '32', 'G'],
]

const DAY_NUMBERS = [
    ['338', '7644'], ['-495', '11140'], ['-241', '14292'], ['2865', '106512'], ['1952', '59976'], ['785', '44478'], ['1402', '34521'], ['', '2'],
]

function dayProfile([x, , high, , , low, width, va0, va1, poc], part) {
    const rows = []
    for (let y = high; y < low; y += 2) {
        const inside = y >= va0 && y < va1
        if (inside !== (part === 'inner')) continue
        const spread = Math.exp(-(((y - poc) / ((low - high) / 3)) ** 2))
        const w = Math.max(2, width * spread * (0.75 + 0.25 * Math.sin(y * 1.7)))
        rows.push(`M${x} ${y}h${w.toFixed(0)}v2h-${w.toFixed(0)}z`)
    }
    return rows.join('')
}

function HistoryWindow() {
    return (
        <section className="flex w-[453px] shrink-0 flex-col overflow-hidden bg-black text-[11px] leading-[15px] whitespace-pre text-white">
            <header className="flex h-[15px] shrink-0 overflow-hidden pl-[2px]">
                <span className="w-[202px] shrink-0">NQH24_FUT_CME [CB][M]  30 Min  #3</span>
                <span className="w-[61px] shrink-0 bg-white text-black">C: 17988.50</span>
                <span className="w-[46px] shrink-0 pl-px">T: 25070</span>
                <span className="w-[57px] shrink-0 bg-[#00c000] text-black">Chg: 37.00</span>
                <span className="ml-px w-[71px] shrink-0 bg-[#00c000] text-black">DChg: 484.00</span>
                <span className="shrink-0 pl-[2px]">20</span>
            </header>
            <svg className="block shrink-0" width="453" height="1016" viewBox="0 15 453 1016">
                <rect x="0" y="15" width="197" height="1016" fill="#000040" />
                <rect x="246" y="15" width="207" height="1016" fill="#004040" />
                <polyline points="25,261 62,255 123,245 179,246 221,250 268,244 320,232 370,235 417,236 453,228" fill="none" stroke="#0080ff" />
                <polyline points="29,530 196,495 221,489 268,478 319,464 453,425" fill="none" stroke="#f0f" />
                <path d="M25.5 264V320M9 304L25.5 320L42 304" fill="none" stroke="#f00" />
                {DAY_CANDLES.map((c) => {
                    const [x, type, high, top, bottom, low, , , , poc] = c
                    const late = x > 240
                    const stroke = PALETTE[type].stroke
                    return (
                        <g key={x}>
                            <path d={dayProfile(c, 'outer')} fill={late ? '#0040c0' : '#0000a0'} />
                            <path d={dayProfile(c, 'inner')} fill={late ? '#00a0ff' : '#0060e0'} />
                            <path d={`M${x} ${poc}h24`} stroke={x > 200 ? '#e0ff20' : '#c0c040'} strokeWidth="3" />
                            <path d={`M${x} ${high}V${low}`} stroke={stroke} strokeWidth="1" />
                            <rect x={x - 14} y={top + 0.5} width="28" height={bottom - top} fill="none" stroke={stroke} />
                        </g>
                    )
                })}
                <path d="M0 420.5H148M124 430.5H197M197 443.5H246M246 377.5H295M295 355.5H344M344 341.5H393M393 330.5H442M442 325.5H453" stroke="#fff" strokeDasharray="3 2" />
                <path d="M368.5 174l6 12h-12ZM74.5 377l6 12h-12Z" fill="#0f0" />
                <path d="M172.5 382l6 -12h-12Z" fill="#f00" />
                <rect x="55" y="414" width="10" height="11" fill="#80ff80" />
                <text x="55" y="424" textAnchor="middle" fill="#fff" className="text-[12px]">177</text>
                {DAY_LABELS.map(([x, y, text, c]) => (
                    <g key={`${x}-${y}`}>
                        <rect x={x - 3} y={y - 6} width="10" height="12" fill={c === 'G' ? '#008000' : '#f00'} />
                        <text x={x} y={y + 4} textAnchor="middle" fill="#fff" className="text-[12px]">{text}</text>
                    </g>
                ))}
                <path d="M270 377L319 439" stroke="#0080ff" />
                <rect x="318" y="439" width="135" height="21" fill="#000" />
                <text x="319" y="456" className="text-[15px]" fill="#0080ff" xmlSpace="preserve">PD: -31.75  EV: 17886.50</text>
            </svg>
            <p className="h-[114px] shrink-0 pl-[2px] leading-[18px]">Volume</p>
            <p className="h-[14px] shrink-0 pl-[2px]">Numbers Bars Calculated Values</p>
            <table className="w-[491px] table-fixed border-collapse border-t border-white text-center">
                <tbody>
                    <tr className="h-[36px] border-b border-white">
                        <th className="w-[98px] text-left font-normal text-[#60e000]">AskV - BidV:</th>
                        {DAY_NUMBERS.map(([d], k) => (
                            <td key={k} className={`w-[49px] border-l border-white p-0 ${d[0] === '-' ? 'text-[#e00000]' : 'text-[#60e000]'}`}>{d}</td>
                        ))}
                    </tr>
                    <tr className="h-[36px]">
                        <th className="text-left font-normal">Number Trades:</th>
                        {DAY_NUMBERS.map(([, n], k) => (
                            <td key={k} className={`border-l border-white p-0 ${n === '106512' ? 'bg-[#0000ff]' : ''}`}>{n}</td>
                        ))}
                    </tr>
                </tbody>
            </table>
            <p className="mt-[50px] pl-[2px]">Study Subgraphs Divide/Ratio  <span className="text-[#0f0]">Ratio: 0.050</span>   (ID6.SG1, ID6.SG12, 0, No)</p>
            <p className="mt-1 pl-[2px]">Moving Average - Simple  <span className="text-[#0f0]">Avg: 22124.30</span>   (Volume, 20)</p>
        </section>
    )
}

function StudiesDialog() {
    const button = `block h-[28px] w-[105px] ${RAISED}`
    return (
        <div className="absolute top-[580px] left-[500px] flex h-[466px] w-[343px] flex-col items-end rounded-lg bg-[#f0f0f0] pr-[14px] font-['Liberation_Sans',Arial,sans-serif] text-[13px] text-black shadow-[0_8px_24px_rgba(0,0,0,0.5)]">
            <div className="-mr-[14px] flex h-[30px] w-[343px] items-center justify-end rounded-t-lg bg-[#f3f3f3] pr-[6px]">
                <button type="button" aria-label="Close studies"><X className="h-[18px] w-[18px] text-[#909090]" strokeWidth={1} /></button>
            </div>
            <div className="mt-[33px] flex flex-col gap-[14px]">
                <button type="button" className={button}>Move Up</button>
                <button type="button" className={button}>Move Down</button>
                <button type="button" className={button}>Settings</button>
            </div>
            <div className="mt-[48px] flex flex-col gap-[18px]">
                <button type="button" className={button}>Duplicate</button>
                <button type="button" className={button}>Remove</button>
                <button type="button" aria-label="Add" className={button} />
            </div>
            <div className="mt-2 flex h-[99px] flex-col gap-[18px] border border-[#a0a0a0] pt-[13px]">
                <button type="button" aria-label="Save" className={button} />
                <button type="button" aria-label="Apply" className={button} />
            </div>
        </div>
    )
}

const INPUTS = [
    ['Input Study 1   (In:1)', 'ID40.SG2'],
    ['Input Study 2   (In:2)', 'ID40.SG3'],
    ['Draw Zeros   (In:3)', 'No'],
]

function SettingsDialog() {
    const rows = [...INPUTS, ...Array(19).fill(['', ''])]
    return (
        <div role="dialog" aria-label="Study Settings" className="absolute top-[531px] left-[26px] h-[618px] w-[766px] rounded-lg bg-[#f0f0f0] font-['Liberation_Sans',Arial,sans-serif] text-[13px] text-black shadow-[0_10px_32px_rgba(0,0,0,0.55)]">
            <div className="flex h-[29px] items-center justify-between rounded-t-lg bg-[#eef3fb] pr-[6px] pl-[9px]">
                <h1 className="font-['Open_Sans',sans-serif] text-[11px]">Study Settings: Study Subgraphs Reference. ID:34</h1>
                <button type="button" aria-label="Close"><X className="h-[18px] w-[18px]" strokeWidth={1} /></button>
            </div>
            <div role="tablist" className="mt-4 ml-[15px] flex h-[22px] items-end">
                <button role="tab" type="button" className="relative -mb-px h-[23px] w-[126px] border-t border-r-2 border-l border-t-white border-r-[#696969] border-l-white bg-[#f0f0f0] pb-1">Settings and Inputs</button>
                <button role="tab" type="button" className="h-[19px] w-[76px] border-t border-r-2 border-t-white border-r-[#696969]">Subgraphs</button>
                <button role="tab" type="button" className="ml-px h-[19px] w-[47px] border-t border-r-2 border-l border-t-white border-r-[#696969] border-l-white">Alerts</button>
            </div>
            <div className="ml-[15px] flex h-[492px] w-[739px] border border-t-white border-r-2 border-b-2 border-l-white border-r-[#696969] border-b-[#696969]">
                <div className="ml-[14px] flex w-[208px] flex-col items-start pt-[37px] leading-[16px]">
                    <p>Very Low Precedence</p>
                    <label htmlFor="based" className="mt-[10px]">Based On:</label>
                    <Combo id="based" value="<Main Price Graph>" className="mt-[5px] w-[206px]" />
                    <label htmlFor="short" className="mt-[9px]">Short Name:</label>
                    <input id="short" className={`mt-[5px] h-[22px] w-[207px] bg-white ${SUNKEN}`} />
                    <label htmlFor="region" className="mt-[9px]">Chart Region:</label>
                    <div className="flex h-[28px] w-full items-end justify-between">
                        <Combo id="region" value="8" className="w-[97px]" />
                        <button type="button" className={`h-[28px] w-[98px] ${RAISED}`}>Scale</button>
                    </div>
                    <label htmlFor="format" className="mt-[8px]">Value Format:</label>
                    <Combo id="format" value="0.001" className="mt-[4px] w-[169px]" />
                    <CheckBox label="Display As Main Price Graph" className="mt-[13px]" />
                    <CheckBox label="Hide Study" className="mt-[8px]" />
                    <CheckBox label={<span>Draw Study Underneath<br />Main Price Graph</span>} checked className="mt-[6px]" />
                    <CheckBox label="Protect with Password" className="mt-[7px]" />
                    <label htmlFor="dll" className="mt-[8px]">DLLName.FunctionName</label>
                    <input id="dll" readOnly value="SierraChartStudies_64" className={`mt-[5px] h-[22px] w-[140px] bg-[#f0f0f0] px-px ${SUNKEN}`} />
                    <CheckBox label="Include in Study Summary" checked className="mt-[6px]" />
                    <CheckBox label="Include in Spreadsheet" checked className="mt-[7px]" />
                </div>
                <div className="ml-[12px] w-[489px] pt-[15px]">
                    <div className={`h-[399px] overflow-hidden bg-white ${SUNKEN}`}>
                        <table className="w-full table-fixed border-collapse leading-[16px] whitespace-pre">
                            <thead>
                                <tr className="h-[21px] text-left">
                                    <th className="w-[323px] border-r border-b-2 border-r-[#a0a0a0] border-b-[#a0a0a0] bg-[#f0f0f0] py-0 pl-[5px] font-normal">Input Name</th>
                                    <th className="border-r border-b-2 border-r-[#a0a0a0] border-b-[#a0a0a0] bg-[#f0f0f0] py-0 pl-[5px] font-normal">Input Value</th>
                                </tr>
                            </thead>
                            <tbody>
                                {rows.map(([name, value], k) => (
                                    <tr key={k} className="h-[17px] border-b border-[#f0f0f0]">
                                        <td className="border-r border-[#f0f0f0] py-0 pl-1">{name}</td>
                                        <td className="border-r border-[#f0f0f0] py-0 pl-[5px]">{value}</td>
                                    </tr>
                                ))}
                            </tbody>
                        </table>
                    </div>
                    <fieldset className="mt-[7px] h-[54px] border border-[#a0a0a0] pl-[9px]">
                        <legend className="-ml-[2px] px-px leading-[16px]">Input</legend>
                        <p className="mt-[4px] leading-[16px]">Select an input in the list above</p>
                    </fieldset>
                </div>
            </div>
            <div className="mt-[10px] ml-[14px] flex gap-[10px]">
                <button type="button" className={`h-[28px] w-[92px] ${RAISED} outline outline-1 outline-[#696969]`}>OK</button>
                {['Cancel', 'Apply', 'Help'].map((t) => (
                    <button key={t} type="button" className={`h-[28px] w-[92px] ${RAISED}`}>{t}</button>
                ))}
                <button type="button" className={`h-[28px] w-[100px] ${RAISED}`}>Description</button>
                <button type="button" className={`h-[28px] w-[108px] ${RAISED}`}>Set Defaults</button>
                <button type="button" className={`h-[28px] w-[108px] ${RAISED}`}>Reset Defaults</button>
            </div>
        </div>
    )
}

export default function App() {
    return (
        <div className="relative flex h-screen overflow-hidden bg-black font-['Open_Sans','Noto_Sans',sans-serif]">
            <HistoryWindow />
            <section className="flex min-w-0 flex-1 flex-col bg-[#f0f0f0] text-black">
                <Toolbar />
                <nav className="flex h-[26px] shrink-0 items-start border-t border-b-2 border-t-[#a0a0a0] border-b-[#808080] pt-px text-[11px] leading-[20px]">
                    <a href="#example" className="h-[21px] w-[109px] border-r border-[#a0a0a0] pl-1">ExampleChartbook</a>
                    <a href="#market" className="ml-px h-[21px] w-[100px] bg-[#0078d7] pl-[3px] text-white">JST_demo_market</a>
                </nav>
                <div className="flex min-h-0 flex-1">
                    <TradePanel />
                    <ChartWindow />
                </div>
                <footer className="h-[6px] shrink-0 border-t border-white bg-[#f0f0f0]" />
            </section>
            <StudiesDialog />
            <SettingsDialog />
        </div>
    )
}
